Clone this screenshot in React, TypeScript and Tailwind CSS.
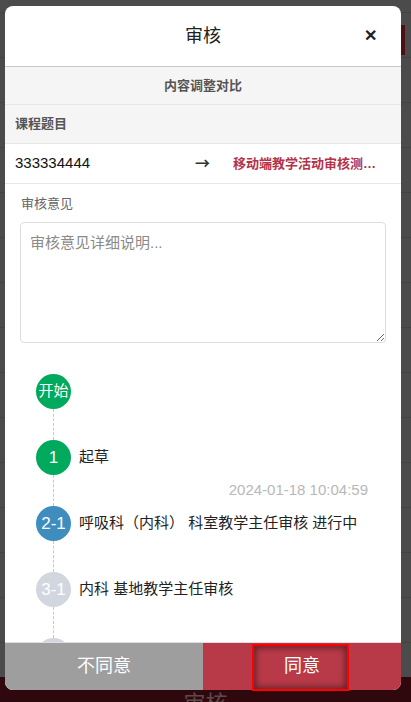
const font = "font-['Liberation_Sans','Microsoft_YaHei','Noto_Sans_CJK_SC',sans-serif]";

const steps = [
  { label: "开始", text: "", color: "bg-[#00a95c]", small: true },
  { label: "1", text: "起草", color: "bg-[#00a95c]", time: "2024-01-18 10:04:59" },
  { label: "2-1", text: "呼吸科（内科） 科室教学主任审核 进行中", color: "bg-[#3f8dbf]" },
  { label: "3-1", text: "内科 基地教学主任审核", color: "bg-[#d2d6df]" },
  { label: "", text: "", color: "bg-[#d2d6df]" },
];

export default function App() {
  return (
    <div className={`relative h-[702px] w-full overflow-hidden bg-[#4b4b4b] ${font}`}>
      {/* dimmed page behind the dialog */}
      <div className="flex flex-col pt-[12px]">
        {Array.from({ length: 15 }).map((_, i) => (
          <div key={i} className="h-[45px] border-t border-[#424242]" />
        ))}
      </div>
      <div className="absolute right-[6px] top-[25px] h-[30px] w-[6px] bg-[#4a1015]" />
      <div className="absolute left-0 right-0 top-[677px] flex h-[52px] items-center justify-center bg-[#2e080c] text-[22px] text-[#5e4a4c]">
        审核
      </div>

      {/* dialog */}
      <div className="absolute left-[5px] top-[6px] flex h-[684px] w-[396px] flex-col overflow-hidden rounded-[8px] bg-white">
        <div className="relative flex h-[61px] shrink-0 items-center justify-center border-b border-[#c9c9c9]">
          <span className="text-[18px] text-[#222]">审核</span>
          <span className="absolute right-[24px] top-[19px] text-[16px] font-bold leading-[22px] text-[#222]">✕</span>
        </div>

        <div className="flex flex-1 flex-col overflow-hidden">
          <div className="flex h-[38px] shrink-0 items-center justify-center border-b border-[#e6e6e6] bg-[#f5f5f5] text-[13px] font-bold text-[#555]">
            内容调整对比
          </div>
          <div className="flex h-[39px] shrink-0 items-center border-b border-[#e6e6e6] bg-[#f5f5f5] pl-[10px] text-[13px] font-bold text-[#555]">
            课程题目
          </div>
          <div className="flex h-[40px] shrink-0 items-center border-b border-[#e6e6e6] pl-[10px] pr-[15px]">
            <span className="w-[180px] shrink-0 text-[15px] text-[#111]">333334444</span>
            <span className="w-[38px] shrink-0 font-['Noto_Sans_CJK_SC',sans-serif] text-[15px] font-bold text-[#333]">→</span>
            <span className="min-w-0 flex-1 truncate text-[13px] font-bold text-[#b3334a]">移动端教学活动审核测试内容</span>
          </div>

          <div className="px-[15px] pt-[10px]">
            <div className="pl-[1px] text-[13px] leading-[20px] text-[#666]">审核意见</div>
            <textarea
              placeholder="审核意见详细说明..."
              className="mt-[8px] block h-[121px] w-full resize-y rounded-[4px] border border-[#dcdcdc] px-[9px] py-[9px] text-[15px] leading-[22px] outline-none placeholder:text-[#8a8a8a]"
            />
          </div>

          <div className="flex flex-col pl-[31px] pr-[33px] pt-[31px]">
            {steps.map((s, i) => (
              <div key={i} className="flex flex-col">
                <div className="flex items-center">
                  <div
                    className={`flex h-[35px] w-[35px] shrink-0 items-center justify-center rounded-full text-white ${s.color} ${s.small ? "text-[15px]" : "text-[17px]"}`}
                  >
                    {s.label}
                  </div>
                  <span className="ml-[8px] text-[15px] text-[#222]">{s.text}</span>
                </div>
                {i < steps.length - 1 && (
                  <div className="relative flex h-[31px] items-center">
                    <div className="absolute bottom-0 left-[17px] top-0 border-l border-dashed border-[#c8c8c8]" />
                    {s.time && <span className="ml-auto text-[15px] text-[#b8b8b8]">{s.time}</span>}
                  </div>
                )}
              </div>
            ))}
          </div>
        </div>

        <div className="flex h-[48px] shrink-0 border-t border-[#dedede] text-[18px] text-white">
          <div className="flex flex-1 items-center justify-center bg-[#9e9e9e]">不同意</div>
          <div className="flex flex-1 items-center justify-center bg-[#b83a48]">同意</div>
        </div>
      </div>

      {/* focus highlight */}
      <div className="pointer-events-none absolute left-[252px] top-[644px] h-[47px] w-[97px] border-2 border-[#ff0000] shadow-[inset_0_0_6px_2px_rgba(0,0,0,0.45)]" />
    </div>
  );
}
